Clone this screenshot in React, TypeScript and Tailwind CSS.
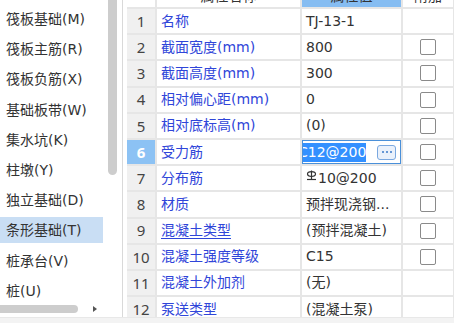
import React from 'react';

const font = { fontFamily: '"DejaVu Sans", "Noto Sans CJK SC", sans-serif' };

const menu = [
  '筏板基础(M)',
  '筏板主筋(R)',
  '筏板负筋(X)',
  '基础板带(W)',
  '集水坑(K)',
  '柱墩(Y)',
  '独立基础(D)',
  '条形基础(T)',
  '桩承台(V)',
  '桩(U)',
];

type Row = { name: string; value: string; check: boolean; underline?: boolean };

const rows: Row[] = [
  { name: '名称', value: 'TJ-13-1', check: false },
  { name: '截面宽度(mm)', value: '800', check: true },
  { name: '截面高度(mm)', value: '300', check: true },
  { name: '相对偏心距(mm)', value: '0', check: true },
  { name: '相对底标高(m)', value: '(0)', check: true },
  { name: '受力筋', value: 'C12@200', check: true },
  { name: '分布筋', value: '10@200', check: true },
  { name: '材质', value: '预拌现浇钢...', check: true },
  { name: '混凝土类型', value: '(预拌混凝土)', check: true, underline: true },
  { name: '混凝土强度等级', value: 'C15', check: true },
  { name: '混凝土外加剂', value: '(无)', check: false },
  { name: '泵送类型', value: '(混凝土泵)', check: false, underline: true },
];

// HRB400 rebar grade mark
function RebarMark() {
  return (
    <svg width="11" height="11" viewBox="0 0 11 11" className="mr-[1px] -mt-[6px] shrink-0">
      <ellipse cx="5.5" cy="4" rx="4" ry="2.4" fill="none" stroke="#333" strokeWidth="1.2" />
      <line x1="5.5" y1="0.5" x2="5.5" y2="9" stroke="#333" strokeWidth="1.2" />
      <line x1="1" y1="9.5" x2="10" y2="9.5" stroke="#333" strokeWidth="1.2" />
    </svg>
  );
}

function Check() {
  return <div className="w-4 h-4 rounded-[2px] border border-[#8a8a8a] bg-white" />;
}

export default function App() {
  return (
    <div className="w-[454px] h-[323px] bg-white overflow-hidden text-[#333]" style={font}>
      <div className="flex h-[317px]">
        {/* left component list */}
        <div className="w-[123px] flex flex-col border-r border-[#d9d9d9]">
          <div className="flex flex-1 min-h-0">
            <div className="w-[108px] overflow-hidden flex flex-col gap-[4.2px] pt-[6px]">
              {menu.map((m) => (
                <div
                  key={m}
                  className={`shrink-0 h-[26px] w-[103px] flex items-center pl-[6px] text-[14px] leading-none whitespace-nowrap ${
                    m === '条形基础(T)' ? 'bg-[#c9def4]' : ''
                  }`}
                >
                  {m}
                </div>
              ))}
            </div>
            <div className="w-[9px]">
              <div className="h-[175px] bg-[#cdcdcd] rounded-b-[5px]" />
            </div>
          </div>
          <div className="h-[13px] flex items-center gap-[15px] pb-[3px]">
            <div className="w-[78px] h-[8px] bg-[#cdcdcd] rounded-r-[4px]" />
            <div className="w-0 h-0 border-y-[3.5px] border-y-transparent border-l-[4px] border-l-[#555]" />
          </div>
        </div>

        {/* property grid */}
        <div className="flex-1 pl-[4px] overflow-hidden">
          <div className="grid grid-cols-[28px_143px_99px_50px] gap-[2px] bg-[#e6e6e6] -mt-[15px]">
            <div className="h-[22px] bg-white" />
            <div className="h-[22px] bg-white flex items-center justify-center text-[14px]">属性名称</div>
            <div className="h-[22px] bg-[#86bdf2] flex items-center justify-center text-[14px]">属性值</div>
            <div className="h-[22px] bg-white flex items-center justify-center text-[14px]">附加</div>
            {rows.map((r, i) => {
              const active = i === 5;
              return (
                <React.Fragment key={r.name}>
                  <div
                    className={`h-[24.2px] flex items-center justify-center text-[15px] ${
                      active ? 'bg-[#8cc2f4] text-white font-bold' : 'bg-[#f0f0f0] text-[#444]'
                    }`}
                    style={{ fontFamily: '"Noto Sans", sans-serif' }}
                  >
                    {i + 1}
                  </div>
                  <div className="h-[24.2px] bg-white flex items-center pl-[4px] text-[14px] text-[#2f45d9] whitespace-nowrap">
                    <span className={r.underline ? 'underline underline-offset-[3px]' : ''}>{r.name}</span>
                  </div>
                  {active ? (
                    <div className="h-[24.2px] bg-white border border-[#4a90d9] flex items-center pr-[4px] overflow-hidden">
                      <div className="flex-1 overflow-hidden">
                        <span className="block -ml-[5px] w-fit bg-[#3390ff] text-white text-[14px] leading-[19px] whitespace-nowrap">
                          C12@200
                        </span>
                      </div>
                      <div className="shrink-0 w-[19px] h-[15px] ml-[6px] rounded-[3px] border border-[#7aa8e0] bg-[#eaf1fb] flex items-center justify-center gap-[2px]">
                        <span className="w-[2px] h-[2px] rounded-full bg-[#3a78c8]" />
                        <span className="w-[2px] h-[2px] rounded-full bg-[#3a78c8]" />
                        <span className="w-[2px] h-[2px] rounded-full bg-[#3a78c8]" />
                      </div>
                    </div>
                  ) : (
                    <div className="h-[24.2px] bg-white flex items-center pl-[4px] text-[14px] whitespace-nowrap overflow-hidden">
                      {i === 6 && <RebarMark />}
                      {r.value}
                    </div>
                  )}
                  <div className="h-[24.2px] bg-white flex items-center justify-center">
                    {r.check && <Check />}
                  </div>
                </React.Fragment>
              );
            })}
          </div>
        </div>
      </div>
      <div className="h-[6px] bg-[#f3f3f3] border-t border-[#e8e8e8]" />
    </div>
  );
}
